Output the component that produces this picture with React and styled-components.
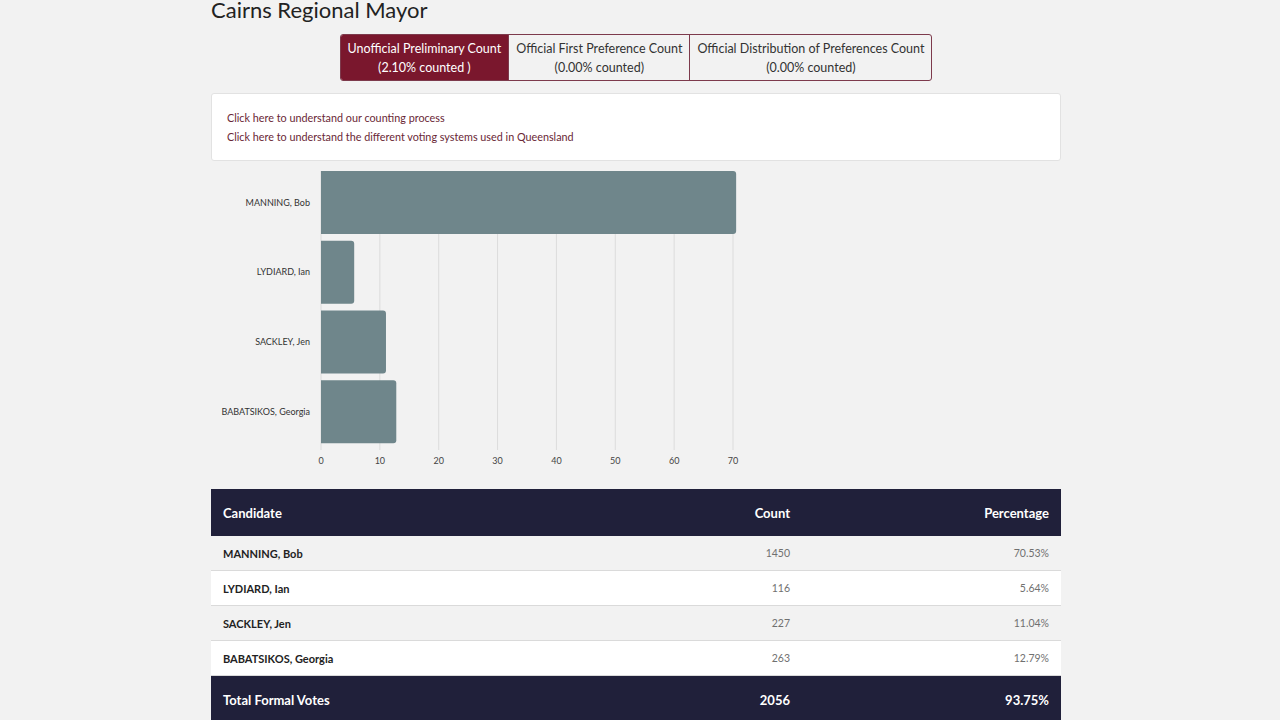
import React from 'react'
import styled, { createGlobalStyle } from 'styled-components'

const candidates = [
	{ name: 'MANNING, Bob', count: 1450, pct: 70.53 },
	{ name: 'LYDIARD, Ian', count: 116, pct: 5.64 },
	{ name: 'SACKLEY, Jen', count: 227, pct: 11.04 },
	{ name: 'BABATSIKOS, Georgia', count: 263, pct: 12.79 },
]

const tabs = [
	{ title: 'Unofficial Preliminary Count', sub: '(2.10% counted )', active: true },
	{ title: 'Official First Preference Count', sub: '(0.00% counted)' },
	{ title: 'Official Distribution of Preferences Count', sub: '(0.00% counted)' },
]

const GlobalStyle = createGlobalStyle`
	html, body {
		margin: 0;
		background: #f2f2f2;
		font-family: Lato, "Noto Sans", sans-serif;
		color: #222;
	}
`

// chart geometry
const X0 = 110
const UNIT = 5.886
const BAND = 69.75
const BAR_H = 63

const Chart = () => {
	const ticks = [0, 10, 20, 30, 40, 50, 60, 70]
	return (
		<ChartSvg width="850" height="300" viewBox="0 0 850 300">
			{ ticks.map(t => (
				<line key={ 'g' + t } x1={ X0 + t * UNIT } x2={ X0 + t * UNIT } y1="1" y2="280" stroke="#dcdcdc" strokeWidth="1" />
			)) }
			{ candidates.map((c, i) => {
				let y = 1 + i * BAND
				let w = c.pct * UNIT
				return (
					<g key={ c.name }>
						<path
							d={ `M${ X0 } ${ y } H${ X0 + w - 3 } Q${ X0 + w } ${ y } ${ X0 + w } ${ y + 3 } V${ y + BAR_H - 3 } Q${ X0 + w } ${ y + BAR_H } ${ X0 + w - 3 } ${ y + BAR_H } H${ X0 } Z` }
							fill="#6f868b" />
						<text x={ X0 - 11 } y={ y + BAR_H / 2 + 3 } textAnchor="end" fontSize="9" fill="#333">{ c.name }</text>
					</g>
				)
			}) }
			{ ticks.map(t => (
				<text key={ 't' + t } x={ X0 + t * UNIT } y="294" textAnchor="middle" fontSize="9" fill="#444">{ t }</text>
			)) }
		</ChartSvg>
	)
}

const App = () => {
	return (
		<Page>
			<GlobalStyle />
			<Title>Cairns Regional Mayor</Title>
			<TabRow>
				<TabGroup>
					{ tabs.map(t => (
						<Tab key={ t.title } $active={ t.active }>
							<span>{ t.title }</span>
							<span>{ t.sub }</span>
						</Tab>
					)) }
				</TabGroup>
			</TabRow>
			<InfoBox>
				<InfoLink href="#">Click here to understand our counting process</InfoLink>
				<InfoLink href="#">Click here to understand the different voting systems used in Queensland</InfoLink>
			</InfoBox>
			<Chart />
			<Table>
				<HeadRow>
					<Cell>Candidate</Cell>
					<Cell $right>Count</Cell>
					<Cell $right>Percentage</Cell>
				</HeadRow>
				{ candidates.map((c, i) => (
					<Row key={ c.name } $odd={ i % 2 === 0 }>
						<NameCell>{ c.name }</NameCell>
						<NumCell>{ c.count }</NumCell>
						<NumCell>{ c.pct.toFixed(2) }%</NumCell>
					</Row>
				)) }
				<HeadRow>
					<Cell>Total Formal Votes</Cell>
					<Cell $right>2056</Cell>
					<Cell $right>93.75%</Cell>
				</HeadRow>
			</Table>
		</Page>
	)
}

export default App

const Page = styled.div`
	padding: 0 219px 40px 211px;
`

const Title = styled.h1`
	margin: -3px 0 0;
	font-size: 22px;
	line-height: 26px;
	font-weight: 400;
	color: #222;
`

const TabRow = styled.div`
	display: flex;
	justify-content: center;
	margin-top: 11px;
`

const TabGroup = styled.div`
	display: flex;
	border: 1px solid #7d3a4c;
	border-radius: 3px;
	overflow: hidden;
`

const Tab = styled.div`
	display: flex;
	flex-direction: column;
	align-items: center;
	justify-content: center;
	height: 45px;
	padding: 0 7px;
	font-size: 12.5px;
	line-height: 19px;
	background: ${ p => p.$active ? '#7a172d' : 'transparent' };
	color: ${ p => p.$active ? '#fff' : '#333' };

	& + & {
		border-left: 1px solid #7d3a4c;
	}
`

const InfoBox = styled.div`
	margin-top: 12px;
	background: #fff;
	border: 1px solid #e2e2e2;
	border-radius: 3px;
	padding: 14px 15px;
	display: flex;
	flex-direction: column;
`

const InfoLink = styled.a`
	font-size: 10.8px;
	line-height: 19px;
	color: #6a2736;
	text-decoration: none;
`

const ChartSvg = styled.svg`
	display: block;
	margin-top: 9px;
	margin-bottom: 19px;
	font-family: Lato, "Noto Sans", sans-serif;
`

const Table = styled.div`
	display: flex;
	flex-direction: column;
`

const HeadRow = styled.div`
	display: grid;
	grid-template-columns: 1fr 200px 259px;
	height: 47px;
	align-items: center;
	background: #20203a;
	color: #fff;
	font-size: 13px;
	font-weight: 700;
`

const Cell = styled.div`
	padding: 0 12px;
	text-align: ${ p => p.$right ? 'right' : 'left' };
`

const Row = styled.div`
	display: grid;
	grid-template-columns: 1fr 200px 259px;
	height: 34px;
	align-items: center;
	background: ${ p => p.$odd ? '#f2f2f2' : '#fff' };
	border-bottom: 1px solid #dadada;
`

const NameCell = styled.div`
	padding: 0 12px;
	font-size: 11px;
	font-weight: 700;
	color: #222;
`

const NumCell = styled.div`
	padding: 0 12px;
	text-align: right;
	font-size: 10.5px;
	font-weight: 400;
	color: #707070;
`
